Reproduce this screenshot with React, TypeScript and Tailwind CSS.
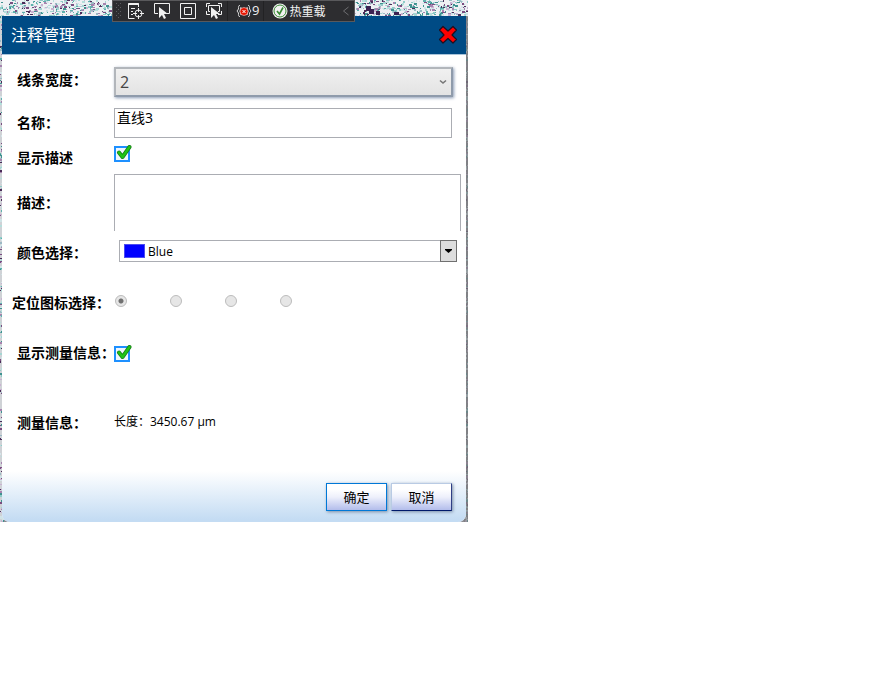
import { useState, type ReactNode } from 'react';

const SPECK_COLORS = ['#8fccc8', '#5fb0ad', '#b5dedb', '#cfe3e6', '#d5e6ea', '#a5d5d2', '#7a4d80', '#a683ae', '#c9b3d1', '#3f9290', '#9bb9c4', '#4a2c58'];

type Speck = { x: number; y: number; w: number; h: number; color: string };

function buildSpecks(width: number, height: number, count: number, seed: number): Speck[] {
  let state = seed;
  const next = () => {
    state = (state + 0x6d2b79f5) | 0;
    let t = Math.imul(state ^ (state >>> 15), 1 | state);
    t = (t + Math.imul(t ^ (t >>> 7), 61 | t)) ^ t;
    return ((t ^ (t >>> 14)) >>> 0) / 4294967296;
  };
  return Array.from({ length: count }, () => ({
    x: Math.floor(next() * width),
    y: Math.floor(next() * height),
    w: 1 + Math.floor(next() * 3),
    h: 1 + Math.floor(next() * 2),
    color: SPECK_COLORS[Math.floor(next() * SPECK_COLORS.length)],
  }));
}

const TISSUE_TOP = buildSpecks(468, 16, 1500, 77);
const TISSUE_EDGE = buildSpecks(4, 522, 420, 19);

function Specks({ specks }: { specks: Speck[] }) {
  return (
    <>
      {specks.map((s, i) => (
        <rect key={i} x={s.x} y={s.y} width={s.w} height={s.h} fill={s.color} />
      ))}
    </>
  );
}

function Tissue() {
  return (
    <div aria-hidden="true" className="absolute inset-0 overflow-hidden bg-[#8b8b90]">
      <svg className="absolute top-0 left-0 bg-[#cfd2d6]" width="4" height="522" shapeRendering="crispEdges">
        <Specks specks={TISSUE_EDGE} />
      </svg>
      <svg className="absolute top-0 right-0 bg-[#808185]" width="4" height="522" shapeRendering="crispEdges">
        <g opacity="0.3">
          <Specks specks={TISSUE_EDGE} />
        </g>
      </svg>
      <svg className="absolute top-0 left-0 bg-[#eef0f3]" width="468" height="16" shapeRendering="crispEdges">
        <Specks specks={TISSUE_TOP} />
        <path d="M366 6h5v3h3v5h-5v-3h-3zM376 11h4v4h-4zM394 12h5v3h-5z" fill="#3c2352" />
      </svg>
    </div>
  );
}

const CURSOR = 'M6 5v11l3-3 2 4 2-1-2-4h4z';

function ToolButton({ label, children }: { label: string; children: ReactNode }) {
  return (
    <button type="button" aria-label={label} className="flex h-5 w-[18px] items-center justify-center">
      <svg width="18" height="18" viewBox="0 0 18 18" fill="none" stroke="#f1f1f1" strokeWidth="1">
        {children}
      </svg>
    </button>
  );
}

function DebugToolbar() {
  return (
    <div className="absolute top-0 left-28 z-10 flex h-[22px] w-[243px] items-center border border-[#59595c] bg-[#2d2d30] text-[#f1f1f1]">
      <svg width="8" height="18" className="ml-[2px]" fill="#5c5c60" aria-hidden="true">
        {[1, 5, 9, 13].map((y) => (
          <g key={y}>
            <rect x="1" y={y} width="1" height="1" />
            <rect x="5" y={y} width="1" height="1" />
            <rect x="3" y={y + 2} width="1" height="1" />
          </g>
        ))}
      </svg>
      <div className="ml-1 flex gap-2">
        <ToolButton label="实时可视化树">
          <path d="M11.500 5V1.500h-10v15h6" />
          <path d="M1.500 2h10" strokeWidth="2" />
          <path d="M4 6.500h4M4 9.500h2M4 12.500h2" />
          <circle cx="11.500" cy="11.500" r="3.500" />
          <path d="M11.500 6v4M11.500 13v4M6 11.500h4M13 11.500h4" />
        </ToolButton>
        <ToolButton label="选择元素">
          <path d="M5 11.500H1.500v-10h15v10H14" />
          <path d={CURSOR} fill="#f1f1f1" stroke="none" />
        </ToolButton>
        <ToolButton label="显示布局装饰器">
          <path d="M1.500 1.500h15v15h-15z" />
          <path d="M5.500 5.500h7v7h-7z" />
        </ToolButton>
        <ToolButton label="跟踪具有焦点的元素">
          <path d="M1.500 5V1.500H5M13 1.500h3.500V5M1.500 9v3.500H5M16.500 9v3.500H13" />
          <path d="M5 9.500H3.500v-6h11v6H13" />
          <path d={CURSOR} fill="#f1f1f1" stroke="none" />
        </ToolButton>
      </div>
      <button type="button" className="ml-1 flex h-5 items-center border-l border-[#222224] pl-2 font-['Open_Sans','Noto_Sans_CJK_SC',sans-serif] text-[13px]">
        <svg width="16" height="14" viewBox="0 0 16 14" fill="none" stroke="#d8d8d8" aria-label="绑定失败">
          <path d="M4 1.500C2 1.500 2.500 3 2.500 5L1 7l1.500 2c0 2-.5 3.500 1.500 3.500M12 1.500c2 0 1.500 1.500 1.500 3.500L15 7l-1.500 2c0 2 .5 3.500-1.500 3.500" />
          <path d="M5 3L4 7l1 4M11 3l1 4-1 4" />
          <circle cx="8" cy="7.500" r="4" fill="#e51400" stroke="#fff" strokeWidth="0.500" />
          <path d="M6.500 6l3 3M9.500 6l-3 3" stroke="#fff" />
        </svg>
        9
      </button>
      <button type="button" className="ml-1 flex h-5 items-center gap-px border-l border-[#222224] pl-2 font-['Noto_Sans_CJK_SC',sans-serif] text-xs">
        <svg width="16" height="16" viewBox="0 0 16 16" aria-hidden="true">
          <circle cx="8" cy="8" r="7.500" fill="#f1f1f1" />
          <circle cx="8" cy="8" r="6" fill="none" stroke="#388a34" />
          <path d="M5 8l2.500 3L11 4.500" fill="none" stroke="#388a34" strokeWidth="1.600" />
        </svg>
        热重载
      </button>
      <button type="button" aria-label="折叠" className="mr-1 ml-auto">
        <svg width="8" height="10" viewBox="0 0 8 10" fill="none" stroke="#6d6d70">
          <path d="M6.500 1l-5 4 5 4" />
        </svg>
      </button>
    </div>
  );
}

function GreenCheck({ id, label }: { id: string; label: string }) {
  const [checked, setChecked] = useState(true);
  return (
    <span className="relative block h-4 w-4">
      <input
        id={id}
        type="checkbox"
        aria-label={label}
        checked={checked}
        onChange={(e) => setChecked(e.target.checked)}
        className="block h-4 w-4 appearance-none border-2 border-[#1e90ff] bg-[#eef6fd]"
      />
      {checked && (
        <svg className="pointer-events-none absolute -top-px left-[2px]" width="16" height="16" viewBox="0 0 16 16" fill="none" strokeLinejoin="round" strokeLinecap="round">
          <path d="M3 7.500l3.500 4.500L13.500 2" stroke="#19801a" strokeWidth="4" />
          <path d="M3 7.500l3.500 4.500L13.500 2" stroke="#1fc415" strokeWidth="2.400" />
        </svg>
      )}
    </span>
  );
}

const LABEL = "w-28 shrink-0 pl-[15px] text-sm leading-5 font-bold whitespace-nowrap";

export default function App() {
  const [icon, setIcon] = useState(0);
  return (
    <main className="min-h-screen bg-white font-['Open_Sans','Noto_Sans_CJK_SC',sans-serif] text-black">
      <div className="relative w-full max-w-[468px] px-[2px] pt-4">
        <Tissue />
        <DebugToolbar />
        <section aria-labelledby="dialog-title" className="relative overflow-hidden rounded-b-lg bg-white">
          <header className="flex h-[39px] items-center justify-between border-b border-[#a9c4da] bg-[#004b85] pr-2 pl-[9px]">
            <h1 id="dialog-title" className="text-base leading-6 text-white">注释管理</h1>
            <button type="button" aria-label="关闭">
              <svg width="20" height="20" viewBox="0 0 20 20" strokeLinejoin="round">
                <path d="M5 1.500l5 4.500 5-4.500 3.500 3.500-4.500 5 4.500 4.500-3.500 3.500-5-4.500-5 4.500L1.500 14.500 6 10 1.500 5z" fill="#f00" stroke="#1c1020" strokeWidth="1.200" />
              </svg>
            </button>
          </header>

          <form onSubmit={(e) => e.preventDefault()}>
            <div className="flex flex-col pt-3">
              <div className="flex h-[30px] items-start pr-[13px]">
                <label htmlFor="width" className={LABEL + ' pt-[3px]'}>线条宽度：</label>
                <div className="relative flex-1">
                  <select id="width" className="block h-[30px] w-full appearance-none border-2 border-[#b2b6bb] border-r-[#8f9bab] border-b-[#8f9bab] bg-linear-to-b from-[#f0f0f0] to-[#e3e3e3] pl-1 text-base text-[#444] shadow-[1px_1px_3px_#8a9bb5]">
                    <option>2</option>
                  </select>
                  <svg className="pointer-events-none absolute top-3 right-[6px]" width="8" height="6" viewBox="0 0 8 6" fill="none" stroke="#777" strokeWidth="1.600">
                    <path d="M1 1.500l3 2.500 3-2.500" />
                  </svg>
                </div>
              </div>

              <div className="mt-[11px] flex items-center pr-[14px]">
                <label htmlFor="name" className={LABEL}>名称：</label>
                <input id="name" defaultValue="直线3" className="block h-[30px] min-w-0 flex-1 border border-[#abadb3] pb-3 pl-[2px] text-sm leading-4" />
              </div>

              <div className="mt-2 flex h-[22px] items-start">
                <label htmlFor="show-desc" className={LABEL + ' pt-[2px]'}>显示描述</label>
                <GreenCheck id="show-desc" label="显示描述" />
              </div>

              <div className="mt-[6px] flex items-center pr-[5px]">
                <label htmlFor="desc" className={LABEL}>描述：</label>
                <textarea id="desc" className="block h-[57px] min-w-0 flex-1 resize-none border border-b-0 border-[#abadb3] px-1 text-sm" />
              </div>

              <div className="mt-[9px] flex h-[22px] items-start pr-[9px]">
                <label htmlFor="color" className={LABEL + ' pt-[3px]'}>颜色选择：</label>
                <div className="relative ml-[5px] flex-1">
                  <select id="color" className="block h-[22px] w-full appearance-none border border-[#abadb3] bg-white pt-px pl-7 text-xs">
                    <option>Blue</option>
                  </select>
                  <span className="pointer-events-none absolute top-1 left-[5px] h-[14px] w-[21px] border border-[#4c4cf0] bg-[#00f]" />
                  <span className="pointer-events-none absolute top-0 right-0 flex h-[22px] w-[17px] items-center justify-center border border-[#707070] bg-[#ddd]">
                    <svg width="7" height="4" viewBox="0 0 7 4">
                      <path d="M0 0h7v1L3.500 4 0 1z" fill="#000" />
                    </svg>
                  </span>
                </div>
              </div>

              <div role="radiogroup" aria-labelledby="marker-label" className="mt-7 flex h-[22px] items-start">
                <span id="marker-label" className="w-28 shrink-0 pt-[3px] pl-[10px] text-sm leading-5 font-bold whitespace-nowrap">定位图标选择：</span>
                <div className="flex gap-[43px] pt-[5px] pl-px">
                  {[0, 1, 2, 3].map((n) => (
                    <input
                      key={n}
                      type="radio"
                      name="marker"
                      aria-label={'图标 ' + (n + 1)}
                      checked={icon === n}
                      onChange={() => setIcon(n)}
                      className="block h-3 w-3 appearance-none rounded-full border border-[#bcbcbc] bg-[#e6e6e6] checked:bg-[radial-gradient(circle,#707070_0_2px,#e6e6e6_3px)]"
                    />
                  ))}
                </div>
              </div>

              <div className="mt-[31px] flex h-[22px] items-start">
                <label htmlFor="show-measure" className={LABEL}>显示测量信息：</label>
                <span className="pt-[3px]">
                  <GreenCheck id="show-measure" label="显示测量信息" />
                </span>
              </div>

              <div className="mt-12 flex h-[22px] items-start">
                <span className={LABEL}>测量信息：</span>
                <output className="text-xs leading-[18px]">长度：3450.67 µm</output>
              </div>
            </div>

            <footer className="mt-9 flex justify-end gap-1 bg-linear-to-b from-white to-[#c4dcf3] to-95% pt-3 pr-[14px] pb-[11px]">
              <button type="submit" className="h-7 w-[61px] border border-[#0078d7] bg-linear-to-b from-white from-20% via-[#eef0fb] to-[#b3bdeb] text-[13px] leading-5 shadow-[1px_1px_3px_#7b8fa8]">确定</button>
              <button type="button" className="h-7 w-[61px] border border-[#b9cbe4] border-r-[#2f3f84] border-b-[#001a6b] bg-linear-to-b from-white from-20% via-[#eef0fb] to-[#b3bdeb] text-[13px] leading-5 shadow-[1px_1px_3px_#7b8fa8]">取消</button>
            </footer>
          </form>
        </section>
      </div>
    </main>
  );
}
